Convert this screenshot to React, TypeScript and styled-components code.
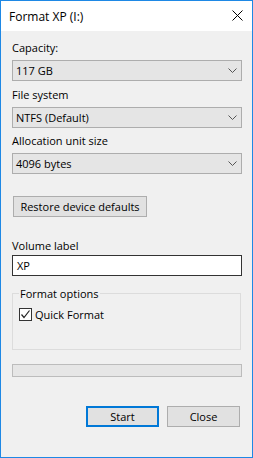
import React from 'react';
import styled, { createGlobalStyle } from 'styled-components';

const GlobalStyle = createGlobalStyle`
	html, body {
		margin: 0;
		padding: 0;
		background: #ffffff;
	}
	* {
		box-sizing: border-box;
	}
`;

const Window = styled.div`
	width: 253px;
	height: 458px;
	border: 1px solid #1e88e5;
	background: #f0f0f0;
	display: flex;
	flex-direction: column;
	font-family: 'Segoe UI', 'Open Sans', sans-serif;
	font-size: 11px;
	color: #000;
`;

const TitleBar = styled.div`
	height: 30px;
	background: #ffffff;
	display: flex;
	align-items: center;
	justify-content: space-between;
	padding: 0 9px 0 8px;
	font-size: 12px;
	flex-shrink: 0;
`;

const CloseIcon = styled.svg`
	width: 11px;
	height: 11px;
	margin-top: -1px;
`;

const Body = styled.div`
	flex: 1;
	display: flex;
	flex-direction: column;
	padding: 9px 10px 0 11px;
`;

const Label = styled.div<{ $top?: number; $gap?: number }>`
	line-height: 15px;
	height: 15px;
	margin-top: ${({ $top }) => $top ?? 0}px;
	margin-bottom: ${({ $gap }) => $gap ?? 5}px;
	white-space: nowrap;
`;

const Combo = styled.div`
	height: 21px;
	border: 1px solid #adadad;
	background: #e5e5e5;
	display: flex;
	align-items: center;
	justify-content: space-between;
	padding: 0 4px 0 3px;
	line-height: 19px;
`;

const Chevron = styled.svg`
	width: 9px;
	height: 5px;
`;

const Button = styled.div<{ $focused?: boolean; $width: number }>`
	width: ${({ $width }) => $width}px;
	height: 21px;
	border: ${({ $focused }) => ($focused ? '2px solid #0078d7' : '1px solid #adadad')};
	background: #e1e1e1;
	display: flex;
	align-items: center;
	justify-content: center;
	line-height: 17px;
	white-space: nowrap;
`;

const RestoreRow = styled.div`
	margin-top: 22px;
	padding-left: 1px;
`;

const TextBox = styled.div`
	height: 21px;
	border: 1px solid #333333;
	background: #ffffff;
	padding: 0 4px;
	line-height: 19px;
`;

const Group = styled.fieldset`
	margin: 10px 1px 0 0;
	padding: 6px 6px 0 6px;
	border: 1px solid #dcdcdc;
	height: 64px;
	min-width: 0;
`;

const Legend = styled.legend`
	padding: 0 1px;
	line-height: 15px;
`;

const CheckRow = styled.div`
	display: flex;
	align-items: center;
	gap: 3px;
	height: 15px;
	line-height: 15px;
`;

const CheckBox = styled.div`
	width: 13px;
	height: 13px;
	border: 1px solid #333333;
	background: #ffffff;
	display: flex;
	align-items: center;
	justify-content: center;
`;

const Progress = styled.div`
	margin-top: 14px;
	height: 13px;
	border: 1px solid #bcbcbc;
	background: #e6e6e6;
`;

const Footer = styled.div`
	margin-top: 29px;
	display: flex;
	justify-content: flex-end;
	gap: 8px;
	padding-right: 2px;
`;

function Dropdown({ value }: { value: string }) {
	return (
		<Combo>
			<span>{value}</span>
			<Chevron viewBox="0 0 9 5">
				<polyline points="0.5,0.5 4.5,4.5 8.5,0.5" fill="none" stroke="#555" strokeWidth="1" />
			</Chevron>
		</Combo>
	);
}

export default function App() {
	return (
		<>
			<GlobalStyle />
			<Window>
				<TitleBar>
					<span>Format XP (I:)</span>
					<CloseIcon viewBox="0 0 11 11">
						<path d="M0.5 0.5 L10.5 10.5 M10.5 0.5 L0.5 10.5" stroke="#000" strokeWidth="1" fill="none" />
					</CloseIcon>
				</TitleBar>
				<Body>
					<Label>Capacity:</Label>
					<Dropdown value="117 GB" />
					<Label $top={6}>File system</Label>
					<Dropdown value="NTFS (Default)" />
					<Label $top={5}>Allocation unit size</Label>
					<Dropdown value="4096 bytes" />
					<RestoreRow>
						<Button $width={134}>Restore device defaults</Button>
					</RestoreRow>
					<Label $top={21} $gap={2}>Volume label</Label>
					<TextBox>XP</TextBox>
					<Group>
						<Legend>Format options</Legend>
						<CheckRow>
							<CheckBox>
								<svg width="11" height="11" viewBox="0 0 11 11">
									<polyline points="1.5,5.5 4,8.5 9.5,1.5" fill="none" stroke="#222" strokeWidth="1.2" />
								</svg>
							</CheckBox>
							<span>Quick Format</span>
						</CheckRow>
					</Group>
					<Progress />
					<Footer>
						<Button $focused $width={73}>Start</Button>
						<Button $width={73}>Close</Button>
					</Footer>
				</Body>
			</Window>
		</>
	);
}
